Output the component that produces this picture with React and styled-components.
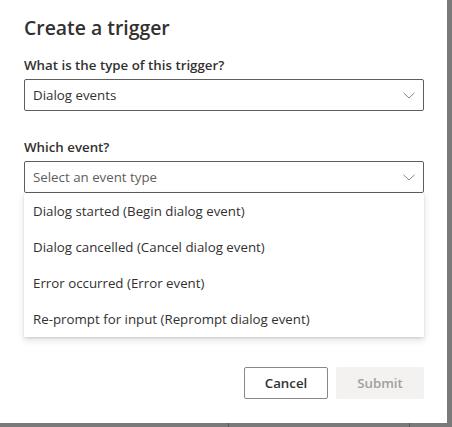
import React from "react";
import styled, { createGlobalStyle } from "styled-components";

const Global = createGlobalStyle`
  html, body {
    margin: 0;
    padding: 0;
    background: #7a7a7a;
  }
  body {
    font-family: "Segoe UI", "Open Sans", "Liberation Sans", sans-serif;
    color: #323130;
  }
`;

const Page = styled.div`
  width: 452px;
  height: 427px;
  position: relative;
  overflow: hidden;
  background: linear-gradient(
    to right,
    transparent 228px,
    #5c5c5c 228px,
    #5c5c5c 229px,
    transparent 229px,
    transparent 409px,
    #5c5c5c 409px,
    #5c5c5c 410px,
    transparent 410px
  );
`;

const Dialog = styled.div`
  width: 447px;
  height: 423px;
  box-sizing: border-box;
  padding: 14px 23px 24px 24px;
  background: #ffffff;
  display: flex;
  flex-flow: column;
`;

const Title = styled.h1`
  margin: 0 0 7px;
  font-size: 19.4px;
  font-weight: 600;
  line-height: 28px;
  color: #323130;
`;

const Field = styled.div`
  position: relative;
  display: flex;
  flex-flow: column;
  margin-bottom: ${(p) => p.$spacing || "0"};
`;

const Label = styled.label`
  font-size: 13.3px;
  font-weight: 600;
  line-height: 20px;
  padding: 6px 0 4px;
  color: #323130;
`;

const Select = styled.div`
  height: 32px;
  box-sizing: border-box;
  border: 1px solid #605e5c;
  border-radius: 2px;
  padding: 0 28px 0 8px;
  display: flex;
  align-items: center;
  position: relative;
  font-size: 13.3px;
  color: ${(p) => (p.$placeholder ? "#605e5c" : "#323130")};
`;

const Chevron = styled.svg`
  position: absolute;
  right: 8px;
  top: 12px;
  width: 12px;
  height: 7px;
`;

const Menu = styled.ul`
  position: absolute;
  left: 0;
  right: 0;
  top: 100%;
  margin: 0;
  padding: 0;
  list-style: none;
  background: #ffffff;
  box-shadow: 0 3.2px 7.2px rgba(0, 0, 0, 0.132),
    0 0.6px 1.8px rgba(0, 0, 0, 0.108);
  z-index: 2;
`;

const Option = styled.li`
  height: 36px;
  padding: 0 9px;
  display: flex;
  align-items: center;
  font-size: 13.3px;
  color: #323130;
`;

const Footer = styled.div`
  margin-top: auto;
  display: flex;
  justify-content: flex-end;
  gap: 8px;
`;

const Button = styled.button`
  height: 32px;
  min-width: ${(p) => (p.$disabled ? "88px" : "84px")};
  padding: 0 16px;
  box-sizing: border-box;
  border-radius: 2px;
  font-family: inherit;
  font-size: 13.3px;
  font-weight: 600;
  border: 1px solid ${(p) => (p.$disabled ? "#f3f2f1" : "#8a8886")};
  background: ${(p) => (p.$disabled ? "#f3f2f1" : "#ffffff")};
  color: ${(p) => (p.$disabled ? "#a19f9d" : "#323130")};
`;

const options = [
  "Dialog started (Begin dialog event)",
  "Dialog cancelled (Cancel dialog event)",
  "Error occurred (Error event)",
  "Re-prompt for input (Reprompt dialog event)",
];

function ChevronDown() {
  return (
    <Chevron viewBox="0 0 12 7">
      <path d="M0.5 0.8 L6 6 L11.5 0.8" fill="none" stroke="#8a8886" strokeWidth="1" />
    </Chevron>
  );
}

export default function App() {
  return (
    <Page>
      <Global />
      <Dialog>
        <Title>Create a trigger</Title>
        <Field $spacing="20px">
          <Label>What is the type of this trigger?</Label>
          <Select>
            Dialog events
            <ChevronDown />
          </Select>
        </Field>
        <Field>
          <Label>Which event?</Label>
          <Select $placeholder>
            Select an event type
            <ChevronDown />
          </Select>
          <Menu>
            {options.map((o) => (
              <Option key={o}>{o}</Option>
            ))}
          </Menu>
        </Field>
        <Footer>
          <Button>Cancel</Button>
          <Button $disabled>Submit</Button>
        </Footer>
      </Dialog>
    </Page>
  );
}
